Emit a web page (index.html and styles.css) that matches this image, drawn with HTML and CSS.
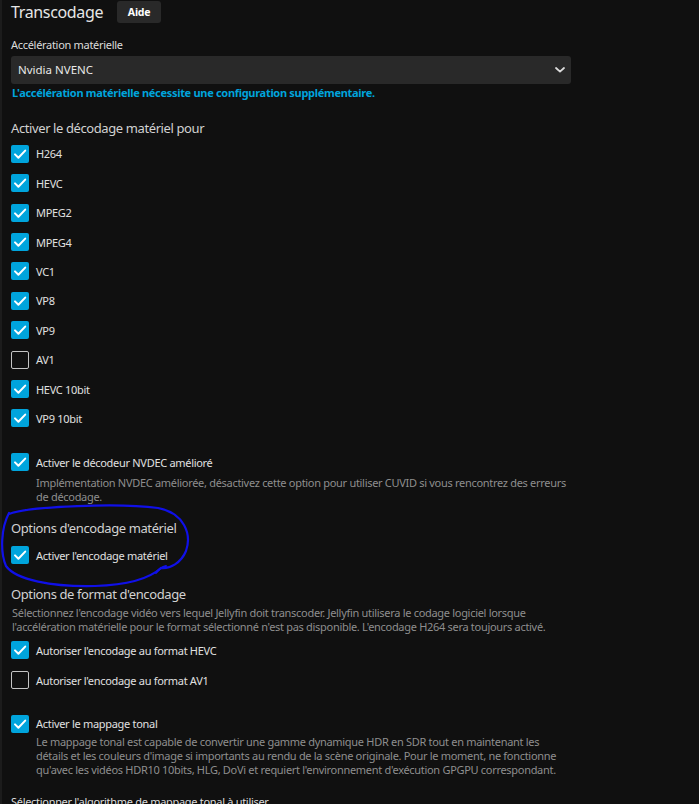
FILE: index.html
```html
<!DOCTYPE html>
<html lang="fr">
<head>
<meta charset="utf-8">
<title>Transcodage</title>
<link rel="stylesheet" href="styles.css">
</head>
<body>
<div class="page">
  <header class="head">
    <h1 class="title">Transcodage</h1>
    <button class="help" type="button">Aide</button>
  </header>

  <label class="field-label">Accélération matérielle</label>
  <div class="select">
    <span>Nvidia NVENC</span>
    <svg class="chev" width="10" height="6" viewBox="0 0 10 6"><path d="M1 1 L5 4.6 L9 1" fill="none" stroke="#dcdcdc" stroke-width="1.8" stroke-linecap="round" stroke-linejoin="round"/></svg>
  </div>
  <div class="warn">L'accélération matérielle nécessite une configuration supplémentaire.</div>

  <h2 class="section s-decode">Activer le décodage matériel pour</h2>
  <div class="checks">
    <div class="check"><span class="box on"><svg viewBox="0 0 18 18"><path d="M4 9.4 L7.4 12.8 L14.2 5.6"/></svg></span><span>H264</span></div>
    <div class="check"><span class="box on"><svg viewBox="0 0 18 18"><path d="M4 9.4 L7.4 12.8 L14.2 5.6"/></svg></span><span>HEVC</span></div>
    <div class="check"><span class="box on"><svg viewBox="0 0 18 18"><path d="M4 9.4 L7.4 12.8 L14.2 5.6"/></svg></span><span>MPEG2</span></div>
    <div class="check"><span class="box on"><svg viewBox="0 0 18 18"><path d="M4 9.4 L7.4 12.8 L14.2 5.6"/></svg></span><span>MPEG4</span></div>
    <div class="check"><span class="box on"><svg viewBox="0 0 18 18"><path d="M4 9.4 L7.4 12.8 L14.2 5.6"/></svg></span><span>VC1</span></div>
    <div class="check"><span class="box on"><svg viewBox="0 0 18 18"><path d="M4 9.4 L7.4 12.8 L14.2 5.6"/></svg></span><span>VP8</span></div>
    <div class="check"><span class="box on"><svg viewBox="0 0 18 18"><path d="M4 9.4 L7.4 12.8 L14.2 5.6"/></svg></span><span>VP9</span></div>
    <div class="check"><span class="box"></span><span>AV1</span></div>
    <div class="check"><span class="box on"><svg viewBox="0 0 18 18"><path d="M4 9.4 L7.4 12.8 L14.2 5.6"/></svg></span><span>HEVC 10bit</span></div>
    <div class="check"><span class="box on"><svg viewBox="0 0 18 18"><path d="M4 9.4 L7.4 12.8 L14.2 5.6"/></svg></span><span>VP9 10bit</span></div>
  </div>

  <div class="opt o-nvdec">
    <div class="check"><span class="box on"><svg viewBox="0 0 18 18"><path d="M4 9.4 L7.4 12.8 L14.2 5.6"/></svg></span><span>Activer le décodeur NVDEC amélioré</span></div>
    <div class="desc d-nvdec">Implémentation NVDEC améliorée, désactivez cette option pour utiliser CUVID si vous rencontrez des erreurs<br>de décodage.</div>
  </div>

  <h2 class="section s-hwenc">Options d'encodage matériel</h2>
  <div class="check c-hwenc"><span class="box on"><svg viewBox="0 0 18 18"><path d="M4 9.4 L7.4 12.8 L14.2 5.6"/></svg></span><span>Activer l'encodage matériel</span></div>

  <h2 class="section s-format">Options de format d'encodage</h2>
  <div class="desc d-format">Sélectionnez l'encodage vidéo vers lequel Jellyfin doit transcoder. Jellyfin utilisera le codage logiciel lorsque<br>l'accélération matérielle pour le format sélectionné n'est pas disponible. L'encodage H264 sera toujours activé.</div>
  <div class="checks c-format">
    <div class="check"><span class="box on"><svg viewBox="0 0 18 18"><path d="M4 9.4 L7.4 12.8 L14.2 5.6"/></svg></span><span>Autoriser l'encodage au format HEVC</span></div>
    <div class="check"><span class="box"></span><span>Autoriser l'encodage au format AV1</span></div>
  </div>

  <div class="opt o-tone">
    <div class="check"><span class="box on"><svg viewBox="0 0 18 18"><path d="M4 9.4 L7.4 12.8 L14.2 5.6"/></svg></span><span>Activer le mappage tonal</span></div>
    <div class="desc d-tone">Le mappage tonal est capable de convertir une gamme dynamique HDR en SDR tout en maintenant les<br>détails et les couleurs d'image si importants au rendu de la scène originale. Pour le moment, ne fonctionne<br>qu'avec les vidéos HDR10 10bits, HLG, DoVi et requiert l'environnement d'exécution GPGPU correspondant.</div>
  </div>

  <label class="field-label l-algo">Sélectionner l'algorithme de mappage tonal à utiliser</label>
</div>

<svg class="annot" width="699" height="804" viewBox="0 0 699 804">
  <path d="M9 514 C 30 506, 120 503, 158 508 C 184 513, 192 534, 186 551 C 181 563, 170 569, 161 568 C 150 578, 128 585, 95 586 C 52 587, 16 580, 6 566 C 0 552, 1 528, 9 513" fill="none" stroke="#1010e8" stroke-width="2.2" stroke-linecap="round"/>
  <path d="M156 573 C 159 569, 162 567, 166 566" fill="none" stroke="#1010e8" stroke-width="2" stroke-linecap="round"/>
</svg>
</body>
</html>
```

FILE: styles.css
```css
html, body {
  margin: 0;
  padding: 0;
  background: #101010;
}

body {
  position: relative;
  width: 699px;
  height: 804px;
  overflow: hidden;
  font-family: "Noto Sans", "Open Sans", "DejaVu Sans", sans-serif;
  color: #e0e0e0;
}

.page {
  box-sizing: border-box;
  height: 804px;
  border-left: 2px solid #1c1c1c;
  padding-left: 9px;
}

.head {
  display: flex;
  align-items: flex-start;
  height: 24px;
}

.title {
  margin: 0;
  font-size: 16px;
  line-height: 24px;
  font-weight: 400;
  letter-spacing: -0.35px;
  color: #e6e6e6;
}

.help {
  margin: 1px 0 0 14px;
  width: 44px;
  height: 22px;
  padding: 0;
  border: none;
  border-radius: 3px;
  background: #292929;
  color: #ffffff;
  font-family: inherit;
  font-size: 10.5px;
  font-weight: 700;
  letter-spacing: -0.2px;
}

.field-label {
  display: block;
  margin-top: 13px;
  font-size: 11px;
  line-height: 16px;
  letter-spacing: -0.3px;
  color: #dcdcdc;
  white-space: nowrap;
}

.select {
  box-sizing: border-box;
  width: 560px;
  height: 28px;
  margin-top: 3px;
  padding: 0 6px 0 7px;
  display: flex;
  align-items: center;
  justify-content: space-between;
  background: #292929;
  border-radius: 3px;
  font-size: 11.5px;
  line-height: 28px;
  color: #e8e8e8;
}

.chev {
  display: block;
}

.warn {
  margin-top: 1px;
  padding-left: 1px;
  font-size: 11px;
  line-height: 16px;
  font-weight: 700;
  letter-spacing: -0.3px;
  color: #00a4dc;
  white-space: nowrap;
}

.section {
  margin: 0;
  font-size: 13px;
  line-height: 18px;
  font-weight: 400;
  letter-spacing: -0.4px;
  color: #d2d2d2;
}

.s-decode { margin-top: 17.6px; }
.s-hwenc { margin-top: 15px; }
.s-format { margin-top: 20px; }

.checks {
  display: flex;
  flex-direction: column;
  gap: 10.4px;
  margin-top: 7.8px;
}

.check {
  display: flex;
  align-items: center;
  gap: 7px;
  height: 19px;
  font-size: 11px;
  letter-spacing: -0.3px;
  color: #e0e0e0;
  white-space: nowrap;
}

.box {
  box-sizing: border-box;
  flex: none;
  width: 18px;
  height: 18px;
  border: 1.5px solid #c4c4c4;
  border-radius: 2px;
}

.box.on {
  border: none;
  background: #00a4dc;
}

.box svg {
  display: block;
  width: 18px;
  height: 18px;
}

.box svg path {
  fill: none;
  stroke: #ffffff;
  stroke-width: 2;
  stroke-linecap: round;
  stroke-linejoin: round;
}

.opt.o-nvdec { margin-top: 25px; }

.desc {
  font-size: 11px;
  line-height: 14px;
  letter-spacing: -0.3px;
  color: #8e8e8e;
  white-space: nowrap;
}

.d-nvdec { margin: 4.4px 0 0 25px; }
.c-hwenc { margin-top: 8.6px; }
.d-format { margin-top: 3px; padding-left: 1px; }
.c-format { margin-top: 7px; gap: 11px; }
.opt.o-tone { margin-top: 24.3px; }
.d-tone { margin: 2.1px 0 0 25px; }
.l-algo { margin-top: 16.3px; }

.annot {
  position: absolute;
  left: 0;
  top: 0;
  pointer-events: none;
}
```
